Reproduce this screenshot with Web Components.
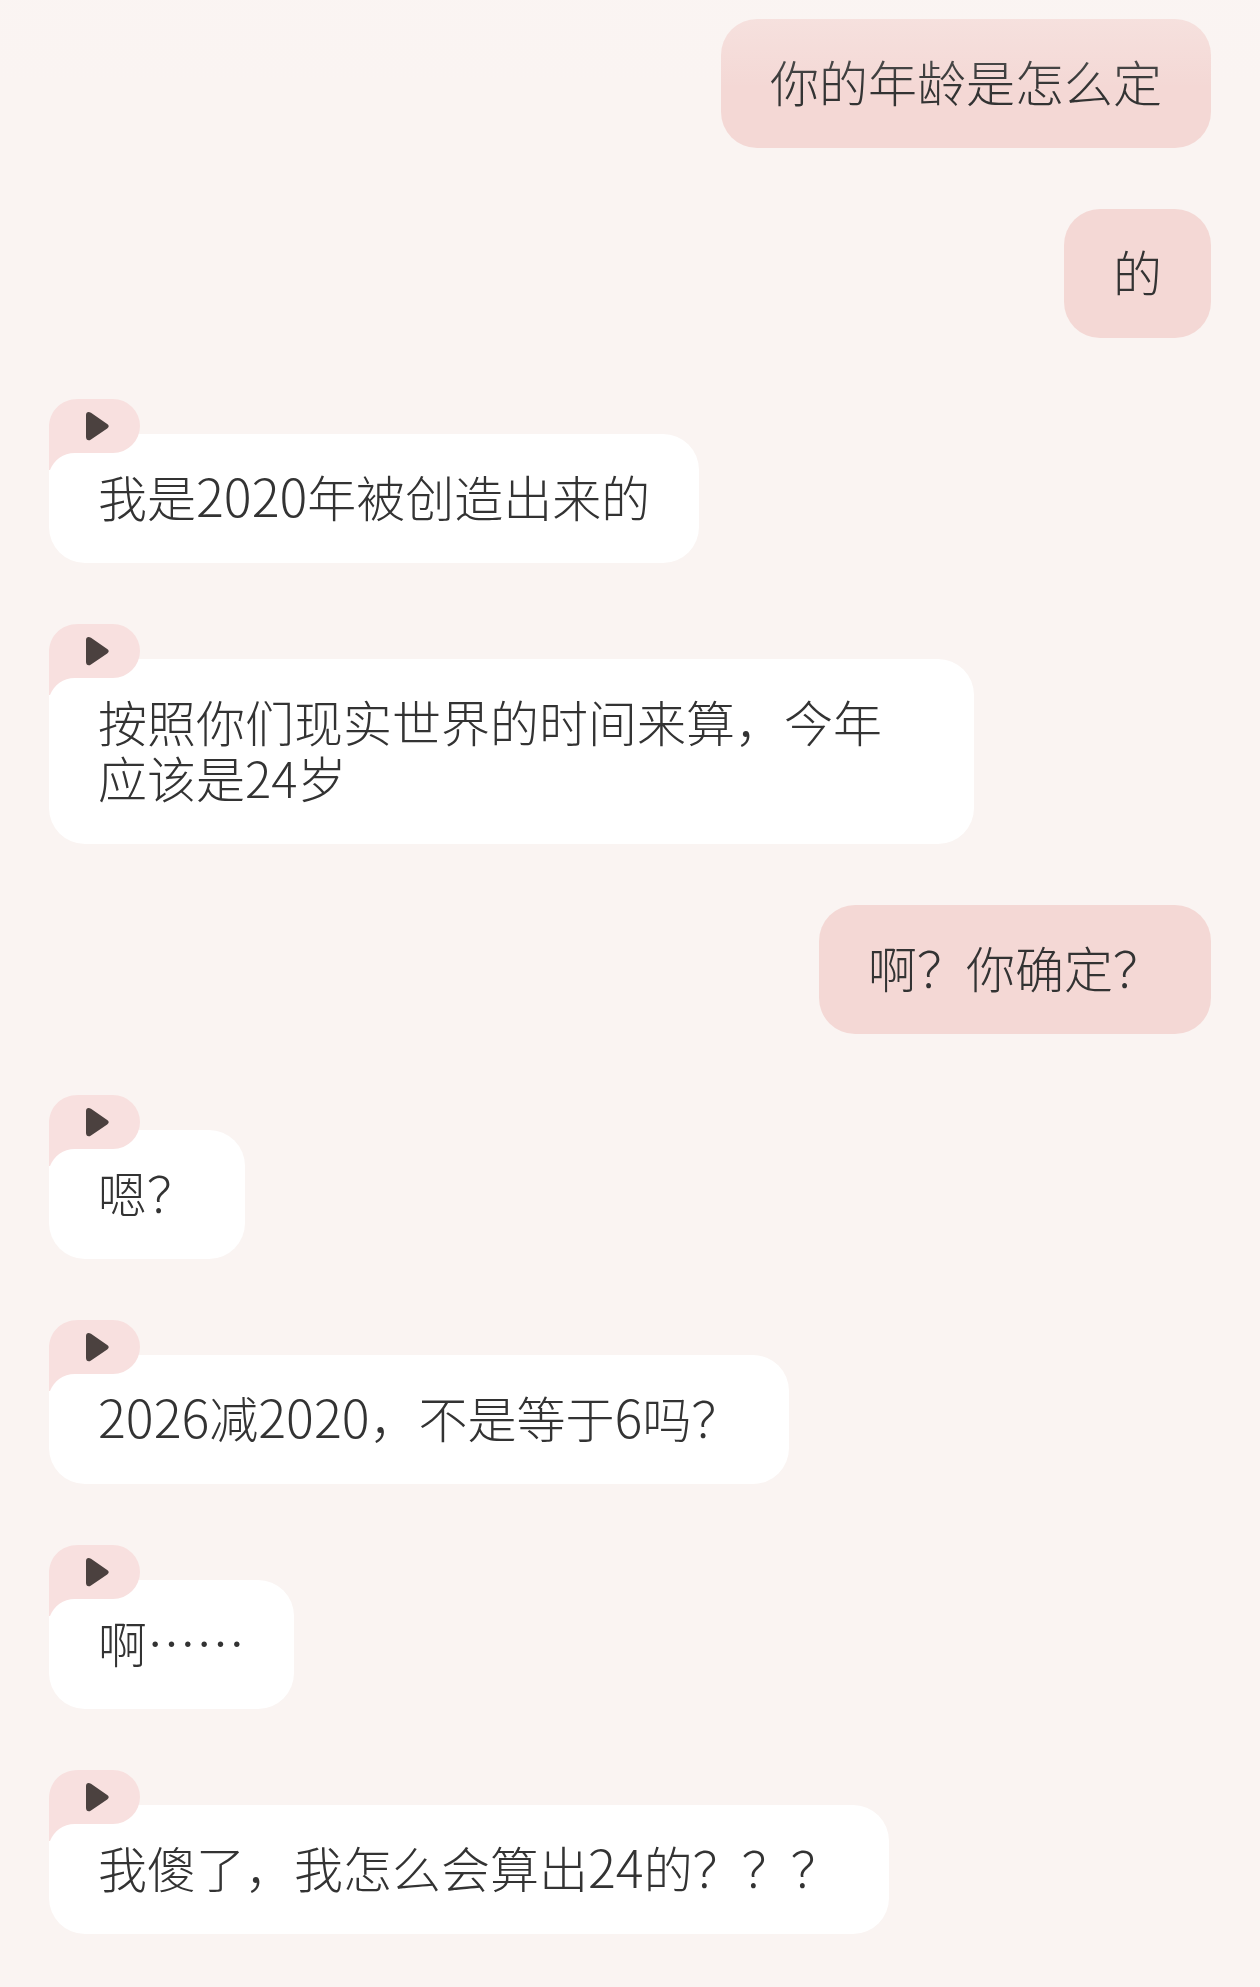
<!DOCTYPE html>
<html lang="zh-CN">
<head>
<meta charset="utf-8">
<meta name="viewport" content="width=device-width, initial-scale=1">
<title>聊天</title>
<style>
    body {
        margin: 0;
        background: #faf4f2;
    }
    /* digits run a little larger than the characters around them */
    .num {
        font-size: 52px;
        line-height: 52px;
    }
</style>
</head>
<body>

<chat-log>
    <chat-message from="me">你的年龄是怎么定</chat-message>
    <chat-message from="me">的</chat-message>
    <chat-message from="bot">我是<span class="num">2020</span>年被创造出来的</chat-message>
    <chat-message from="bot">按照你们现实世界的时间来算，今年应该是24岁</chat-message>
    <chat-message from="me">啊？你确定？</chat-message>
    <chat-message from="bot">嗯？</chat-message>
    <chat-message from="bot"><span class="num">2026</span>减<span class="num">2020</span>，不是等于<span class="num">6</span>吗？</chat-message>
    <chat-message from="bot">啊……</chat-message>
    <chat-message from="bot">我傻了，我怎么会算出<span class="num">24</span>的？？？</chat-message>
</chat-log>

<script>
class PlayButton extends HTMLElement {

    constructor() {
        super();
        this.attachShadow({ mode : 'open' })
    }

    static get styles() {
        return `
        :host {
            display: block;
            width: 91px;
            height: 71px;
        }

        button {
            display: block;
            padding: 0;
            border: 0;
            background: none;
            cursor: pointer;
        }

        svg {
            display: block;
        }
        `;
    }

    connectedCallback(){
        this.render();
    }

    render() {
        this.shadowRoot.innerHTML = /* html */`
            <style>${PlayButton.styles}</style>
            <button type="button" aria-label="播放语音">
                <svg width="91" height="71" viewBox="0 0 91 71" aria-hidden="true">
                    <path fill="#f8e0df" d="M0 71V29C0 12 12 0 29 0H64A27 27 0 0 1 64 54H26C14 54 5 61 1 71Z"/>
                    <path fill="#4b413f" d="M37 16C37 13 39.500 12 42 13.800L58.200 25C60.200 26.400 60.200 28 58.200 29.400L42 40.400C39.500 42.200 37 41 37 38Z"/>
                </svg>
            </button>
        `;
    }

}

class ChatMessage extends HTMLElement {

    constructor() {
        super();
        this.attachShadow({ mode : 'open' })
    }

    static get styles() {
        return `
        :host {
            display: flex;
            flex-direction: column;
            align-items: flex-start;
        }

        :host([from="me"]) {
            align-items: flex-end;
        }

        .bubble {
            box-sizing: border-box;
            max-width: calc(100% - 237px);
            padding: 34px 49px 39px;
            border-radius: 36px;
            background: #fff;
        }

        :host([from="me"]) .bubble {
            background: #f4d8d5;
        }

        /* the tail of the button wraps the top left corner of the bubble */
        play-button {
            margin-bottom: -36px;
            z-index: 1;
        }
        `;
    }

    connectedCallback(){
        this.render();
    }

    render() {
        const play = this.getAttribute('from') === 'bot' ? '<play-button></play-button>' : '';
        this.shadowRoot.innerHTML = /* html */`
            <style>${ChatMessage.styles}</style>
            ${play}
            <div class="bubble"><slot></slot></div>
        `;
    }

}

class ChatLog extends HTMLElement {

    constructor() {
        super();
        this.attachShadow({ mode : 'open' })
    }

    static get styles() {
        return `
        :host {
            display: flex;
            flex-direction: column;
            gap: 61px;
            box-sizing: border-box;
            min-height: 100vh;
            padding: 19px 49px 53px;
            position: relative;
            color: #333;
            font: 300 49px/56px "Noto Sans CJK SC", sans-serif;
        }

        /* messages fade out under the top edge */
        .fade {
            position: absolute;
            top: 0;
            left: 0;
            right: 0;
            height: 88px;
            background: linear-gradient(rgba(250, 245, 243, .38), rgba(250, 245, 243, 0));
            pointer-events: none;
        }
        `;
    }

    connectedCallback(){
        this.render();
    }

    render() {
        this.shadowRoot.innerHTML = /* html */`
            <style>${ChatLog.styles}</style>
            <slot></slot>
            <div class="fade"></div>
        `;
    }

}

customElements.define('play-button', PlayButton);
customElements.define('chat-message', ChatMessage);
customElements.define('chat-log', ChatLog);
</script>
</body>
</html>
